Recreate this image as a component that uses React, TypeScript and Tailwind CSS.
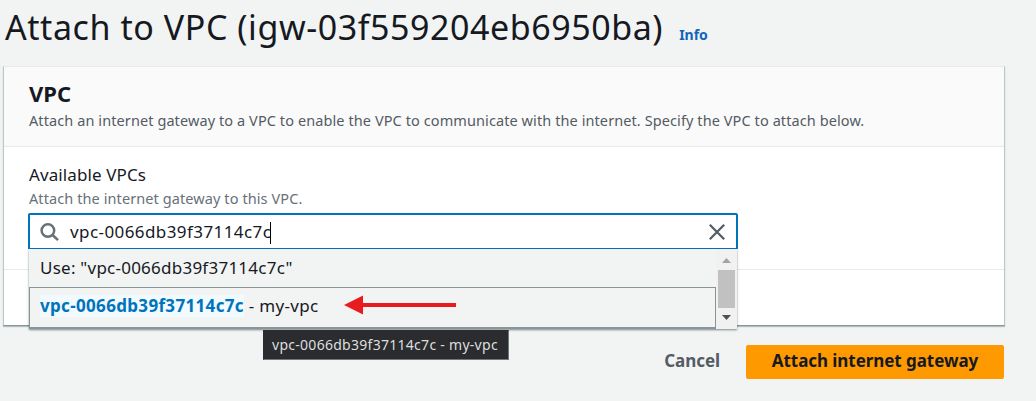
export default function App() {
  return (
    <div className="h-[401px] w-[1036px] overflow-hidden bg-[#f2f4f4] font-['Noto_Sans','Open_Sans',sans-serif] text-[#16191f]">
      <header className="flex h-[66px] items-baseline whitespace-nowrap pl-[5px] pt-[3px]">
        <h1 className="text-[34px] leading-[48px] tracking-[0.56px]">Attach to VPC (igw-03f559204eb6950ba)</h1>
        <a className="ml-[16px] text-[14px] font-bold text-[#1166bb]">Info</a>
      </header>
      <main className="ml-[3px] flex h-[260px] w-[1002px] flex-col border border-t-[#e6eaea] border-r-[#bfc7c8] border-b-[#879596] border-l-[#bfc7c8] bg-white shadow-[0_1px_1px_rgba(0,28,36,0.25)]">
        <section className="h-[80px] whitespace-nowrap border-b border-[#e6eaea] bg-[#fafafa] pl-[25px] pt-[12px]">
          <h2 className="text-[22px] font-bold leading-[28px]">VPC</h2>
          <p className="mt-[2px] text-[14.5px] leading-[22px] tracking-[0.09px] text-[#545b64]">Attach an internet gateway to a VPC to enable the VPC to communicate with the internet. Specify the VPC to attach below.</p>
        </section>
        <section className="h-[123px] whitespace-nowrap border-b border-[#e6eaea] pl-[24px] pt-[17px]">
          <label className="block pl-px text-[17px] leading-[22px] tracking-[0.1px]">Available VPCs</label>
          <p className="pl-px pt-px text-[14.5px] leading-[22px] tracking-[0.09px] text-[#687078]">Attach the internet gateway to this VPC.</p>
          <div className="relative mt-[4px] w-[710px]">
            <div className="flex h-[36px] items-center rounded-t-[2px] border-2 border-b border-[#0073bb] bg-white pl-[10px] pr-[11px]">
              <svg className="h-[20px] w-[20px]" viewBox="0 0 20 20" fill="none" stroke="#687078" strokeWidth="2.5">
                <circle cx="7.9" cy="8.5" r="6.3" />
                <path d="M12.6 13 L18 18.2" />
              </svg>
              <span className="ml-[10px] text-[17px] leading-[26px] tracking-[0.42px]">vpc-0066db39f37114c7c</span>
              <i className="-ml-px mt-[2px] h-[22px] w-px bg-black" />
              <svg className="ml-auto h-[18px] w-[16px]" viewBox="0 0 16 18" fill="none" stroke="#545b64" strokeWidth="2.2">
                <path d="M0.8 1.7 L15.2 16.3 M15.2 1.7 L0.8 16.3" />
              </svg>
            </div>
            <div className="absolute left-px top-[36px] flex h-[80px] w-[708px] bg-[#f2f3f3] shadow-[0_1px_2px_rgba(0,28,36,0.5)]">
              <div className="flex w-[687px] flex-col">
                <div className="h-[38px] pl-[11px] pt-[6px] text-[17px] leading-[26px] tracking-[0.24px]"><span>Use: "vpc-0066db39f37114c7c"</span></div>
                <div className="h-[42px] border border-b-2 border-[#879596] pl-[10px] pt-[5px] text-[17px] leading-[26px] tracking-[0.33px]">
                  <b className="inline-block h-[22px] bg-[#f1faff] leading-[22px] text-[#0073bb]">vpc-0066db39f37114c7c</b><span> - my-vpc</span>
                </div>
              </div>
              <div className="flex flex-1 flex-col items-center bg-[#f1f1f1] pr-[1px] pt-[9px]">
                <svg className="h-[5px] w-[9px]" viewBox="0 0 9 5"><path d="M0 5 L4.5 0 L9 5Z" fill="#a3a3a3" /></svg>
                <i className="mt-[7px] h-[38px] w-[17px] bg-[#c1c1c1]" />
                <svg className="mt-[7px] h-[5px] w-[9px]" viewBox="0 0 9 5"><path d="M0 0 L4.5 5 L9 0Z" fill="#505050" /></svg>
              </div>
              <svg className="absolute left-[315px] top-[46px] h-[20px] w-[112px]" viewBox="0 0 112 20" fill="#e81c1c">
                <path d="M0 10 L19 0.5 V8 H112 V12 H19 V19.5Z" />
              </svg>
              <div className="absolute left-[234px] top-[81px] h-[30px] w-[246px] border border-[#767676] border-t-[#2b2c2f] border-l-[#2b2c2f] bg-[#2b2c2f] pl-2 text-[14px] leading-[28px] tracking-[0.28px] text-[#dedede]"><span>vpc-0066db39f37114c7c - my-vpc</span></div>
            </div>
          </div>
        </section>
      </main>
      <footer className="mt-[19px] flex w-[1004px] justify-end whitespace-nowrap text-[17px] font-bold leading-[31px] tracking-[-0.06px]">
        <button className="mr-[26px] pb-[3px] text-[#545b64]">Cancel</button>
        <button className="h-[34px] w-[258px] rounded-[2px] bg-[#ff9900] pb-[3px]"><span>Attach internet gateway</span></button>
      </footer>
    </div>
  );
}
